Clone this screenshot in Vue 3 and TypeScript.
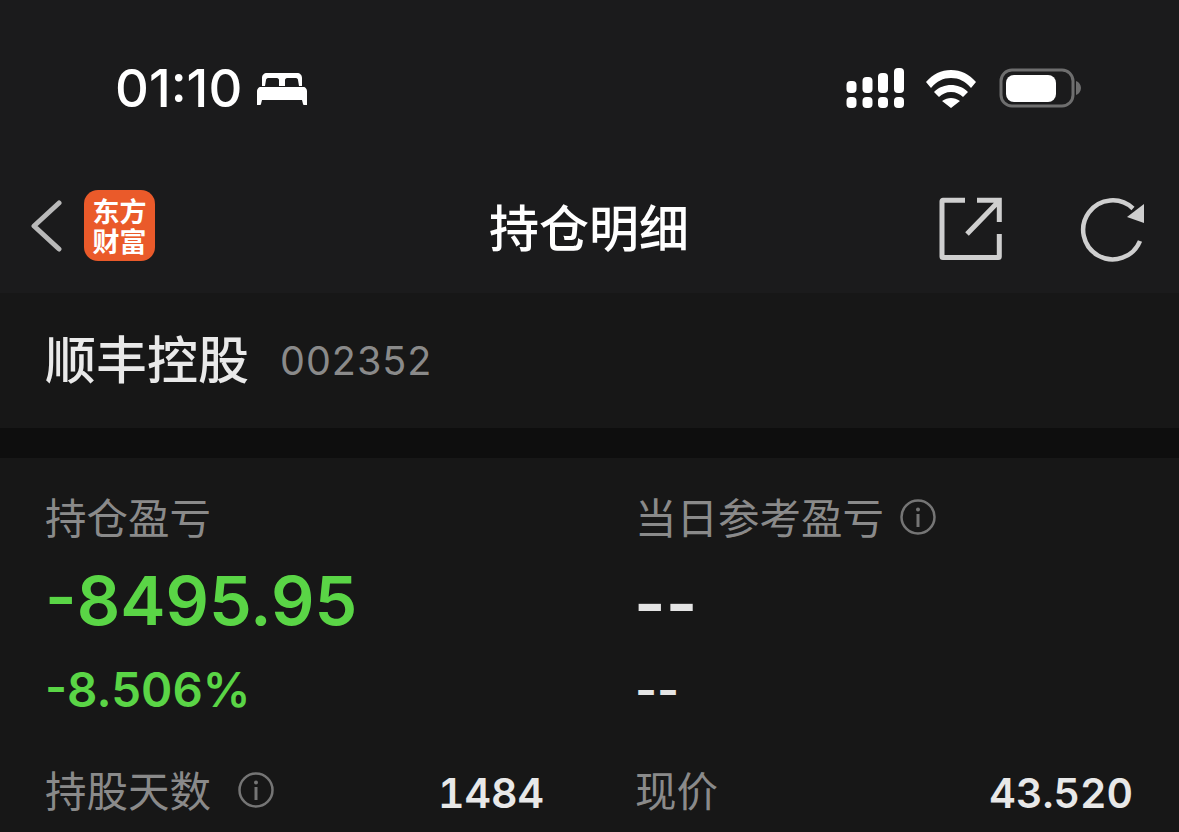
<template>
  <div class="screen">
    <header class="top">
      <div class="status">
        <div class="status-left">
          <span class="time">01:10</span>
          <svg class="bed" width="52" height="36" viewBox="0 0 52 36">
            <path fill="#fff" d="M6 16V8c0-3 2-5 5-5h30c3 0 5 2 5 5v8h-3l-1-6c0-1-1-2-2-2h-9c-1 0-2 1-2 2v6h-6v-6c0-1-1-2-2-2h-9c-1 0-2 1-2 2l-1 6zM4 17h44c1 0 3 2 3 4v14h-3c-1 0-1-1-1-1l-1-4H6l-1 4s0 1-1 1H1V21c0-2 2-4 3-4z" />
          </svg>
        </div>
        <div class="status-right">
          <svg width="60" height="42" viewBox="0 0 60 42">
            <g fill="#fff">
              <rect x="0.5" y="14" width="10" height="12" rx="4" />
              <rect x="16.5" y="10" width="10" height="16" rx="4" />
              <rect x="32" y="6" width="10" height="20" rx="4" />
              <rect x="48" y="1" width="10" height="25" rx="4" />
              <rect x="0.5" y="30" width="10" height="11" rx="4" />
              <rect x="16.5" y="30" width="10" height="11" rx="4" />
              <rect x="32" y="30" width="10" height="11" rx="4" />
              <rect x="48" y="30" width="10" height="11" rx="4" />
            </g>
          </svg>
          <svg class="wifi" width="52" height="40" viewBox="0 0 52 40">
            <path fill="#fff" d="M1 14C8 6 16 2 26 2s18 4 25 12l-5 6C40 13 34 10 26 10S12 13 6 20zM9 24c5-5 11-7 17-7s12 2 17 7l-5 5c-3-3-7-5-12-5s-9 2-12 5zM17 33c3-2 6-3 9-3s6 1 9 3l-9 7z" />
          </svg>
          <svg class="battery" width="84" height="40" viewBox="0 0 84 40">
            <rect x="2" y="2" width="72" height="36" rx="11" fill="none" stroke="#6e6e6e" stroke-width="3" />
            <rect x="7" y="7" width="50" height="27" rx="8" fill="#fff" />
            <path fill="#6e6e6e" d="M77 13c3 1 5 4 5 7s-2 6-5 7z" />
          </svg>
        </div>
      </div>
      <div class="nav">
        <div class="nav-left">
          <svg width="34" height="52" viewBox="0 0 34 52">
            <path d="M30 3 5 26l25 23" fill="none" stroke="#b9b9b9" stroke-width="5" stroke-linecap="round" stroke-linejoin="round" />
          </svg>
          <div class="logo">东方<br />财富</div>
        </div>
        <div class="nav-title">持仓明细</div>
        <div class="nav-right">
          <svg width="64" height="64" viewBox="0 0 64 64">
            <path d="M27 3.200H5a1 1 0 0 0-1 1V59.600a1 1 0 0 0 1 1H60.300a1 1 0 0 0 1-1V37M61.300 25V3.200H39M62 3 29 37" fill="none" stroke="#cfcfcf" stroke-width="5" />
          </svg>
          <svg width="66" height="66" viewBox="0 0 66 66">
            <path d="M61 45A29.500 29.500 0 1 1 54 12.500" fill="none" stroke="#cfcfcf" stroke-width="4.500" />
            <path d="M65 8v19l-17-6z" fill="#cfcfcf" />
          </svg>
        </div>
      </div>
    </header>

    <section class="stock">
      <span class="stock-name">顺丰控股</span>
      <span class="stock-code">002352</span>
    </section>

    <section class="pnl">
      <div class="pnl-grid">
        <div class="col">
          <div class="label">持仓盈亏</div>
          <div class="big green">-8495.95</div>
          <div class="mid green">-8.506%</div>
        </div>
        <div class="col">
          <div class="label">当日参考盈亏
            <svg class="info" width="36" height="36" viewBox="0 0 36 36">
              <circle cx="18" cy="18" r="16.500" fill="none" stroke="#757575" stroke-width="2.500" />
              <circle cx="18" cy="10.500" r="2" fill="#757575" />
              <rect x="16.500" y="15" width="3" height="13" fill="#757575" />
            </svg>
          </div>
          <div class="big white">--</div>
          <div class="mid white">--</div>
        </div>
        <div class="row">
          <span class="label">持股天数
            <svg class="info gap" width="36" height="36" viewBox="0 0 36 36">
              <circle cx="18" cy="18" r="16.500" fill="none" stroke="#757575" stroke-width="2.500" />
              <circle cx="18" cy="10.500" r="2" fill="#757575" />
              <rect x="16.500" y="15" width="3" height="13" fill="#757575" />
            </svg>
          </span>
          <span class="val">1484</span>
        </div>
        <div class="row">
          <span class="label">现价</span>
          <span class="val">43.520</span>
        </div>
      </div>
    </section>
  </div>
</template>

<script setup lang="ts">
</script>

<style>
body {
  background: #171717;
}
</style>

<style scoped>
.screen {
  width: 1179px;
  height: 832px;
  overflow: hidden;
  display: flex;
  flex-direction: column;
  background: #0e0e0e;
  font-family: Inter, "Noto Sans CJK SC", sans-serif;
  color: #fff;
}
.top {
  height: 293px;
  background: #1b1b1c;
  flex: none;
}
.status {
  height: 177px;
  padding: 60px 96px 0 115px;
  box-sizing: border-box;
  display: flex;
  justify-content: space-between;
  align-items: flex-start;
}
.status-left {
  display: flex;
  align-items: center;
  gap: 14px;
}
.time {
  font-size: 52.500px;
  line-height: 56px;
  font-weight: 500;
}
.bed {
  display: block;
  margin-top: -1px;
}
.status-right {
  display: flex;
  align-items: center;
  gap: 19px;
  padding-top: 7px;
}
.battery {
  margin-left: 3px;
}
.nav {
  height: 116px;
  padding: 0 34px 0 29px;
  display: grid;
  grid-template-columns: 1fr auto 1fr;
  align-items: start;
}
.nav-left {
  display: flex;
  align-items: center;
  gap: 21px;
  margin-top: 13px;
}
.logo {
  width: 71px;
  height: 71px;
  box-sizing: border-box;
  padding-top: 6px;
  border-radius: 14px;
  background: #ea5a2a;
  text-align: center;
  color: #fff;
  font-family: "Noto Sans CJK SC", sans-serif;
  font-size: 27px;
  line-height: 30px;
  font-weight: 700;
}
.nav-title {
  margin: 17px 0 0 4px;
  font-family: "Noto Sans CJK SC", sans-serif;
  font-size: 50px;
  line-height: 62px;
  font-weight: 500;
}
.nav-right {
  display: flex;
  align-items: center;
  justify-content: flex-end;
  gap: 77px;
  margin-top: 19px;
}
.stock {
  height: 135px;
  flex: none;
  box-sizing: border-box;
  background: #171717;
  padding: 0 45px;
  display: flex;
  align-items: center;
  gap: 31px;
}
.stock-name {
  font-family: "Noto Sans CJK SC", sans-serif;
  font-size: 51px;
  line-height: 60px;
  color: #e9e9e9;
  font-weight: 500;
  margin-top: -8px;
}
.stock-code {
  font-size: 39.500px;
  color: #8a8a8a;
  letter-spacing: 1px;
}
.pnl {
  margin-top: 30px;
  flex: 1;
  background: #171717;
  padding: 33px 45px 0;
}
.pnl-grid {
  display: grid;
  grid-template-columns: 499px 498px;
  column-gap: 91px;
}
.col {
  display: flex;
  flex-direction: column;
}
.label {
  font-family: "Noto Sans CJK SC", sans-serif;
  font-size: 41.500px;
  line-height: 50px;
  color: #8a8a8a;
  display: flex;
  align-items: center;
}
.info {
  margin-left: 16px;
  margin-top: 2px;
}
.info.gap {
  margin-left: 27px;
}
.big {
  font-size: 68px;
  line-height: 84px;
  font-weight: 600;
  margin-top: 17px;
}
.mid {
  font-size: 47.500px;
  line-height: 60px;
  font-weight: 600;
  margin-top: 18px;
}
.green {
  color: #5ad546;
}
.white {
  color: #e4e4e4;
}
.big.white {
  margin-top: 20px;
  margin-bottom: -3px;
  margin-left: -1px;
}
.row {
  display: flex;
  justify-content: space-between;
  align-items: center;
  margin-top: 40px;
}
.val {
  font-size: 41px;
  font-weight: 600;
  color: #e8e8e8;
  font-variant-numeric: tabular-nums;
  margin-top: 8px;
}
</style>
